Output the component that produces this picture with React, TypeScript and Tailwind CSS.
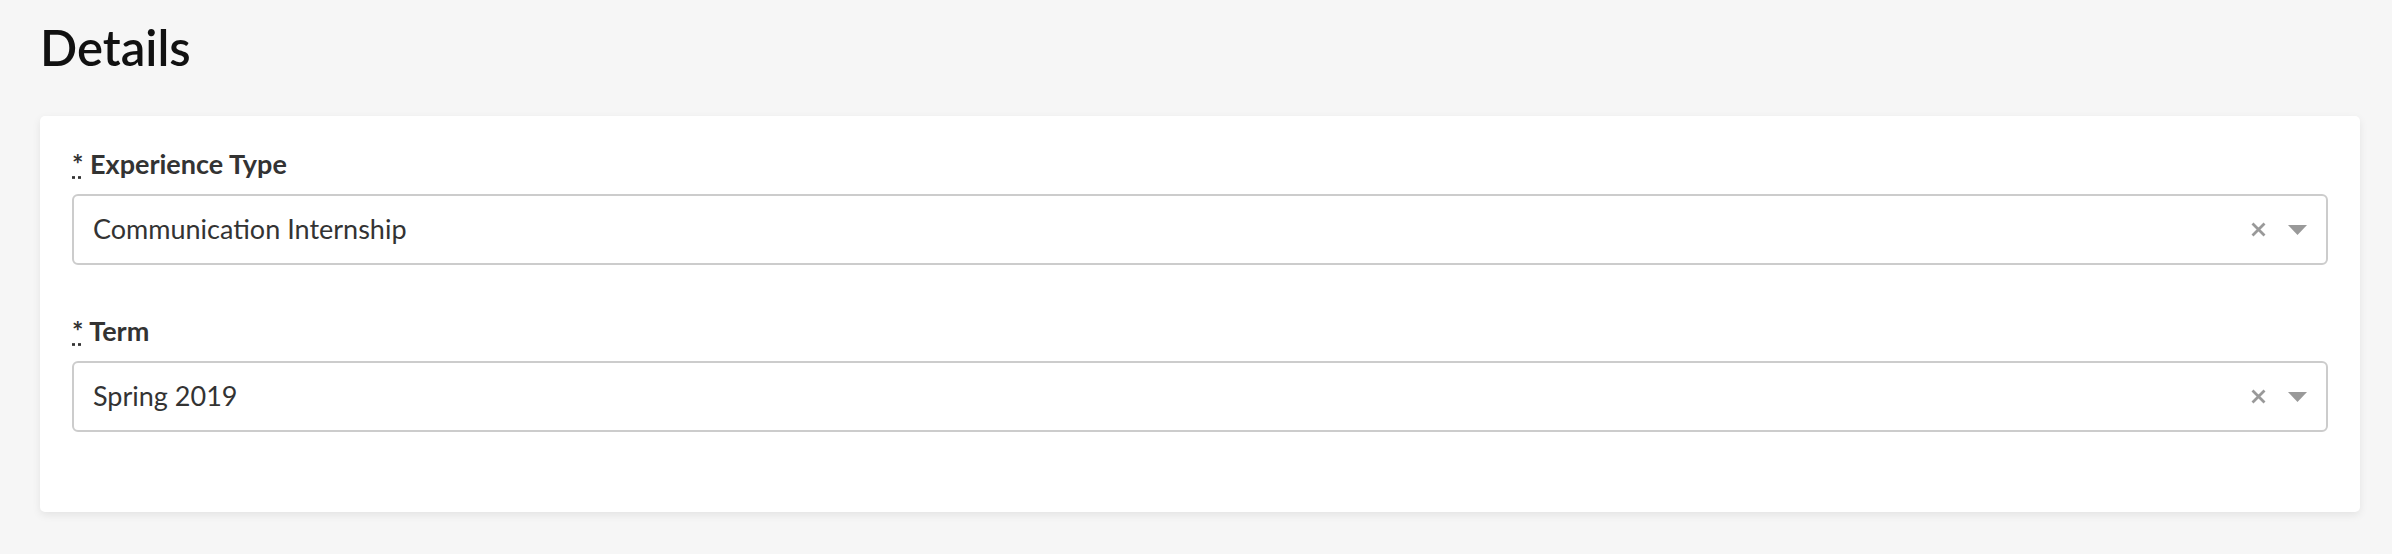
import React from 'react';

type FieldProps = {
	label: string;
	value: string;
};

const SelectField: React.FC<FieldProps> = ({ label, value }) => {
	return (
		<div>
			<label className="block text-[27px] font-bold leading-[32px] text-[#333]">
				<abbr title="required" className="underline decoration-dotted decoration-[#333]">
					*
				</abbr>{' '}
				{label}
			</label>
			<div className="mt-[14px] flex h-[71px] items-center rounded-[6px] border-2 border-[#ccc] bg-white pl-[19px] pr-[19px]">
				<span className="flex-1 text-[27px] text-[#333]">{value}</span>
				<svg width="15" height="15" viewBox="0 0 15 15" className="mr-[22px]">
					<path d="M1.5 1.5 L13.5 13.5 M13.5 1.5 L1.5 13.5" stroke="#999" strokeWidth="2.8" />
				</svg>
				<svg width="19" height="10" viewBox="0 0 19 10">
					<path d="M0 0 H19 L9.5 10 Z" fill="#999" />
				</svg>
			</div>
		</div>
	);
};

export default function App() {
	return (
		<div className="h-[554px] w-full overflow-hidden bg-[#f6f6f6] pl-10 pr-8 pt-[19px] font-['Lato',sans-serif]">
			<h1 className="text-[49px] font-semibold leading-[56px] text-[#111]">Details</h1>
			<div className="mt-[41px] rounded-[5px] bg-white px-8 pt-8 pb-20 shadow-[0_3px_8px_rgba(0,0,0,0.08)]">
				<div className="flex flex-col gap-[50px]">
					<SelectField label="Experience Type" value="Communication Internship" />
					<SelectField label="Term" value="Spring 2019" />
				</div>
			</div>
		</div>
	);
}
